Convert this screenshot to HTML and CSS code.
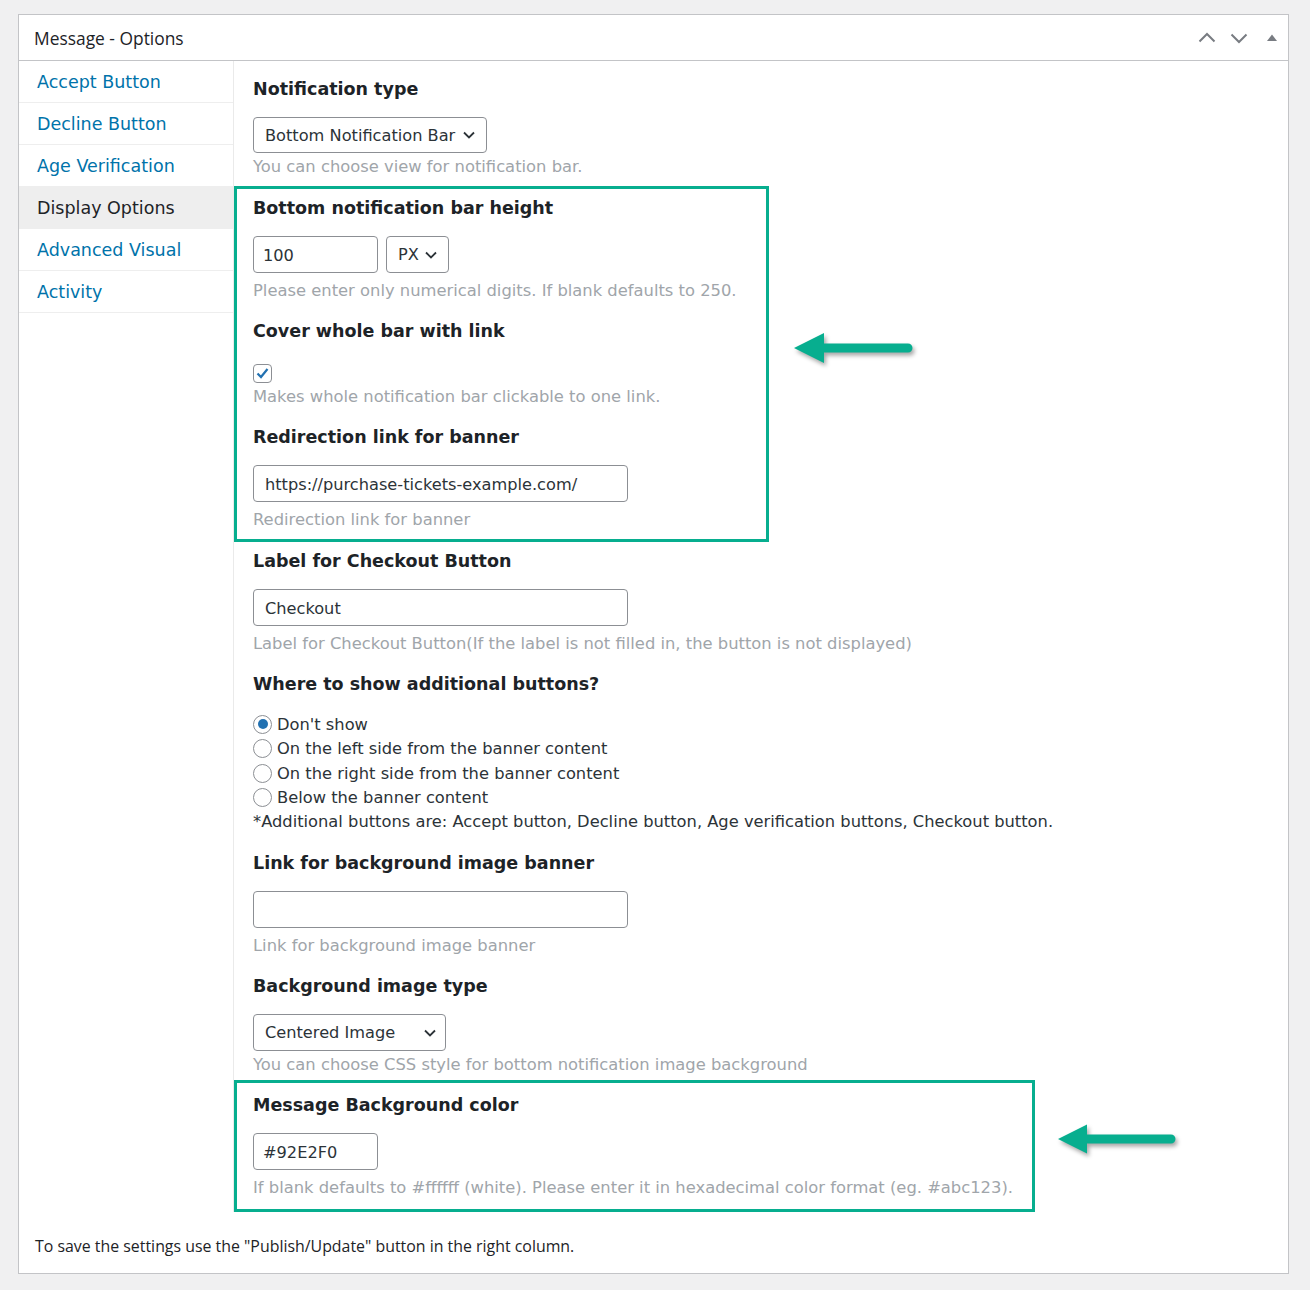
FILE: index.html
```html
<!DOCTYPE html>
<html lang="en">
<head>
<meta charset="utf-8">
<title>Message - Options</title>
<link rel="stylesheet" href="styles.css">
</head>
<body>
<div class="panel">
  <div class="panel-head">
    <h2 class="panel-title">Message - Options</h2>
    <div class="head-actions">
      <svg class="hicon" width="20" height="20" viewBox="0 0 20 20"><polyline points="2.5,13.5 10,6 17.5,13.5" fill="none" stroke="#787c82" stroke-width="2"/></svg>
      <svg class="hicon" width="20" height="20" viewBox="0 0 20 20"><polyline points="2.5,6.5 10,14 17.5,6.5" fill="none" stroke="#787c82" stroke-width="2"/></svg>
      <svg class="hicon hicon-last" width="20" height="20" viewBox="0 0 20 20"><polygon points="5,13 15,13 10,6.5" fill="#787c82"/></svg>
    </div>
  </div>
  <div class="columns">
    <ul class="tabs">
      <li class="tab">Accept Button</li>
      <li class="tab">Decline Button</li>
      <li class="tab">Age Verification</li>
      <li class="tab active">Display Options</li>
      <li class="tab">Advanced Visual</li>
      <li class="tab">Activity</li>
    </ul>
    <div class="content">
      <div class="group">
        <h3 class="label">Notification type</h3>
        <div class="select sel-type"><span>Bottom Notification Bar</span><svg width="14" height="14" viewBox="0 0 14 14"><polyline points="2,4.5 7,9.5 12,4.5" fill="none" stroke="#2c3338" stroke-width="1.8"/></svg></div>
        <p class="desc tight">You can choose view for notification bar.</p>
      </div>

      <div class="hl hl-1">
        <div class="group">
          <h3 class="label">Bottom notification bar height</h3>
          <div class="row">
            <div class="input small">100</div>
            <div class="select sel-px"><span>PX</span><svg width="14" height="14" viewBox="0 0 14 14"><polyline points="2,4.5 7,9.5 12,4.5" fill="none" stroke="#2c3338" stroke-width="1.8"/></svg></div>
          </div>
          <p class="desc">Please enter only numerical digits. If blank defaults to 250.</p>
        </div>
        <div class="group">
          <h3 class="label">Cover whole bar with link</h3>
          <div class="checkbox"><svg width="15" height="15" viewBox="0 0 15 15"><polyline points="2.5,7.5 6,11 12.5,3" fill="none" stroke="#2271b1" stroke-width="2.2"/></svg></div>
          <p class="desc check-desc">Makes whole notification bar clickable to one link.</p>
        </div>
        <div class="group">
          <h3 class="label">Redirection link for banner</h3>
          <div class="input wide">https://purchase-tickets-example.com/</div>
          <p class="desc">Redirection link for banner</p>
        </div>
      </div>

      <div class="group after-hl">
        <h3 class="label">Label for Checkout Button</h3>
        <div class="input wide">Checkout</div>
        <p class="desc">Label for Checkout Button(If the label is not filled in, the button is not displayed)</p>
      </div>

      <div class="group">
        <h3 class="label">Where to show additional buttons?</h3>
        <div class="radios">
          <div class="radio-row"><span class="radio checked"></span><span>Don't show</span></div>
          <div class="radio-row"><span class="radio"></span><span>On the left side from the banner content</span></div>
          <div class="radio-row"><span class="radio"></span><span>On the right side from the banner content</span></div>
          <div class="radio-row"><span class="radio"></span><span>Below the banner content</span></div>
          <p class="note">*Additional buttons are: Accept button, Decline button, Age verification buttons, Checkout button.</p>
        </div>
      </div>

      <div class="group">
        <h3 class="label">Link for background image banner</h3>
        <div class="input wide"></div>
        <p class="desc">Link for background image banner</p>
      </div>

      <div class="group">
        <h3 class="label">Background image type</h3>
        <div class="select sel-img"><span>Centered Image</span><svg width="14" height="14" viewBox="0 0 14 14"><polyline points="2,4.5 7,9.5 12,4.5" fill="none" stroke="#2c3338" stroke-width="1.8"/></svg></div>
        <p class="desc tight">You can choose CSS style for bottom notification image background</p>
      </div>

      <div class="hl hl-2">
        <div class="group">
          <h3 class="label">Message Background color</h3>
          <div class="input small">#92E2F0</div>
          <p class="desc">If blank defaults to #ffffff (white). Please enter it in hexadecimal color format (eg. #abc123).</p>
        </div>
      </div>
    </div>
  </div>
  <p class="footer">To save the settings use the "Publish/Update" button in the right column.</p>

  <svg class="arrow arrow-1" width="125" height="40" viewBox="0 0 125 40"><path d="M3 17 L33 2 L33 12.5 L117 12.5 A4.5 4.5 0 0 1 117 21.5 L33 21.5 L33 32 Z" fill="#07ae8f"/></svg>
  <svg class="arrow arrow-2" width="125" height="40" viewBox="0 0 125 40"><path d="M3 17 L32 2.5 L32 12.5 L116 12.5 A4.5 4.5 0 0 1 116 21.5 L32 21.5 L32 31.5 Z" fill="#07ae8f"/></svg>
</div>
</body>
</html>
```
FILE: styles.css
```css
html, body {
  margin: 0;
  padding: 0;
  background: #f0f0f1;
}
body {
  font-family: "DejaVu Sans", Verdana, sans-serif;
  color: #2c3338;
}
.panel {
  position: relative;
  margin: 14px 0 0 18px;
  width: 1271px;
  box-sizing: border-box;
  background: #fff;
  border: 1px solid #c3c4c7;
}
.panel-head {
  display: flex;
  align-items: center;
  justify-content: space-between;
  height: 45px;
  border-bottom: 1px solid #c3c4c7;
  padding: 0 6px 0 15px;
}
.panel-title {
  margin: 0;
  font: 400 17.4px/22px "Open Sans", "Liberation Sans", sans-serif;
  color: #1d2327;
}
.head-actions {
  display: flex;
  align-items: center;
  gap: 12px;
}
.hicon { display: block; }
.hicon-last { margin-left: 1px; }
.columns {
  display: flex;
  align-items: flex-start;
}
.tabs {
  list-style: none;
  margin: 0;
  padding: 0;
  width: 214px;
  flex: none;
}
.tab {
  box-sizing: border-box;
  height: 42px;
  line-height: 40px;
  padding-top: 1px;
  border-bottom: 1px solid #eee;
  padding-left: 18px;
  font-size: 17.5px;
  color: #0073aa;
}
.tab.active {
  background: #eee;
  color: #1d2327;
}
.content {
  flex: 1;
  border-left: 1px solid #eaeaea;
  padding-top: 15px;
}
.group {
  padding: 0 19px;
}
.group + .group {
  margin-top: 18px;
}
.label {
  margin: 0 0 16px;
  padding-top: 1px;
  font-size: 17.5px;
  line-height: 24px;
  font-weight: 700;
  color: #1d2327;
}
.desc {
  margin: 7px 0 0;
  padding-top: 1px;
  font-size: 16.35px;
  line-height: 19px;
  color: #a0a5aa;
}
.desc.tight { margin-top: 3px; }
.desc.check-desc { margin-top: 3px; }
.select, .input {
  box-sizing: border-box;
  border: 1px solid #8c8f94;
  border-radius: 4px;
  height: 37px;
  font-size: 16.2px;
  color: #2c3338;
  background: #fff;
}
.select {
  display: flex;
  align-items: center;
  justify-content: space-between;
  padding: 0 10px 0 11px;
}
.select svg { display: block; }
.sel-type { width: 234px; height: 36px; }
.sel-px { width: 63px; }
.sel-img { width: 193px; padding-right: 8px; }
.input {
  display: flex;
  align-items: center;
  padding: 1px 11px 0;
}
.input.small { width: 125px; padding-left: 9px; }
.input.wide { width: 375px; }
.row {
  display: flex;
  gap: 8px;
}
.checkbox {
  box-sizing: border-box;
  width: 19px;
  height: 19px;
  margin-top: 21px;
  border: 1px solid #8c8f94;
  border-radius: 4px;
  display: flex;
  align-items: center;
  justify-content: center;
}
.hl {
  box-sizing: border-box;
  border: 3px solid #07ae8f;
}
.hl .group { padding: 0 16px; }
.hl-1 {
  width: 535px;
  margin-top: 10px;
  padding: 6px 0 10px;
}
.hl-2 {
  width: 801px;
  margin-top: 6px;
  padding: 9px 0 12px;
}
.after-hl { margin-top: 6px; }
.radios {
  font-size: 16.3px;
  color: #2c3338;
}
.radio-row {
  display: flex;
  align-items: center;
  gap: 5px;
  height: 24.5px;
}
.radio {
  box-sizing: border-box;
  width: 19px;
  height: 19px;
  border: 1px solid #8c8f94;
  border-radius: 50%;
  position: relative;
  flex: none;
}
.radio.checked::after {
  content: "";
  position: absolute;
  left: 3.5px;
  top: 3.5px;
  width: 10px;
  height: 10px;
  border-radius: 50%;
  background: #2271b1;
}
.note {
  margin: 0;
  padding-top: 1px;
  line-height: 21px;
}
.footer {
  margin: 0;
  padding: 24px 16px 17px;
  font: 400 15.9px/20px "Open Sans", "Liberation Sans", sans-serif;
  color: #1d2327;
}
.arrow {
  position: absolute;
  filter: drop-shadow(2px 3px 2px rgba(0,0,0,0.35));
}
.arrow-1 { left: 772px; top: 316px; }
.arrow-2 { left: 1036px; top: 1107px; }
```
